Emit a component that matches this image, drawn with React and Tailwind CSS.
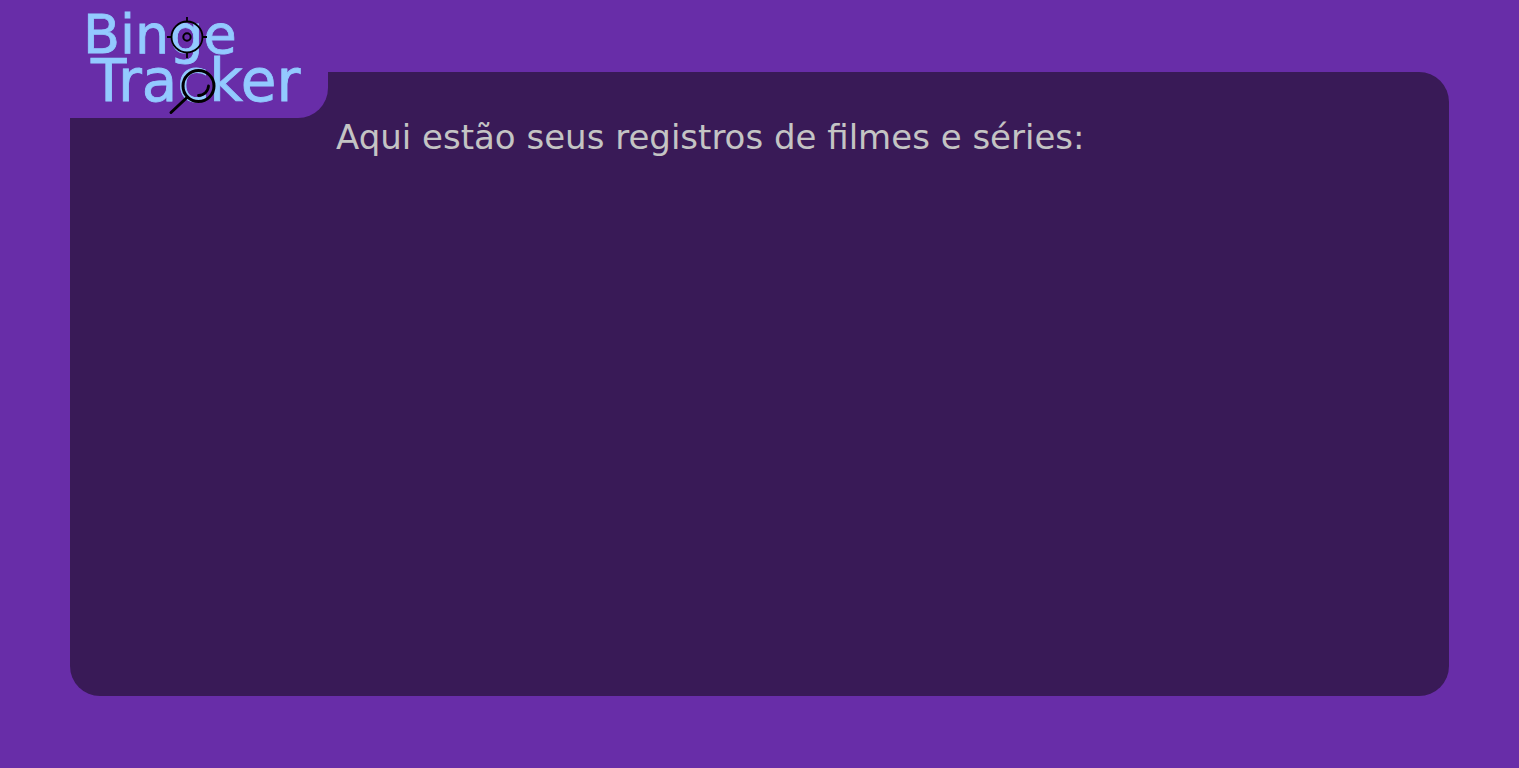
function Logo() {
  return (
    <svg viewBox="0 0 258 118" className="block h-[118px] w-[258px]" role="img" aria-label="Binge Tracker">
      <g fill="#93caff" stroke="#93caff" strokeWidth="0.8" fontFamily="DejaVu Sans, sans-serif">
        <text x="13" y="53" fontSize="54">Binge</text>
        <text x="21" y="101" fontSize="58">Tracker</text>
      </g>
      <g fill="none" stroke="#000">
        <circle cx="117" cy="37" r="15.5" strokeWidth="1.8" />
        <circle cx="117" cy="37" r="3.7" strokeWidth="2" />
        <path d="M117 17v5M117 53v5M97 37h5M132 37h5" strokeWidth="1.8" />
        <circle cx="128.5" cy="86" r="15.5" strokeWidth="3" />
        <path d="M117.5 97L101 112.5" strokeWidth="3" strokeLinecap="round" />
        <path d="M138.5 86A10 10 0 0 1 128.500 95.500" strokeWidth="2.8" strokeLinecap="round" />
      </g>
    </svg>
  );
}

export default function App() {
  return (
    <div className="min-h-screen bg-[#682da8] px-[70px] py-[72px]">
      <main className="flex min-h-[calc(100vh-144px)] items-start gap-2 rounded-[30px] bg-[#391a57]">
        <a href="/" className="-mt-[72px] shrink-0 rounded-br-[30px] bg-[#682da8]">
          <Logo />
        </a>
        <h1 className="mt-10 flex-1 font-['DejaVu_Sans',sans-serif] text-[34px] leading-[50px] text-[#c4c4c4]">
          Aqui estão seus registros de filmes e séries:
        </h1>
      </main>
    </div>
  );
}
